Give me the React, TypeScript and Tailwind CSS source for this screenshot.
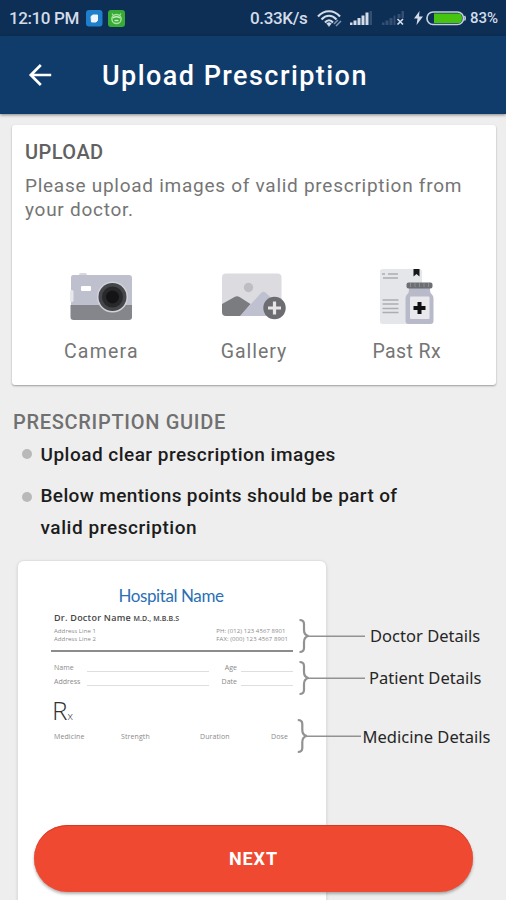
import type { ReactNode } from "react";

function StatusBar() {
  return (
    <div className="flex h-9 items-center bg-[#0d2f56] pl-[9px] text-[#d3dce8]">
      <span className="w-[77px] text-[17px] leading-[37px] font-medium tracking-[-0.4px] whitespace-nowrap">12:10 PM</span>
      <svg className="h-[17px] w-[17px]" viewBox="0 0 17 17">
        <rect width="16.5" height="16.5" rx="3" fill="#1f7fcb" />
        <path d="M5 6.500 7 5h4.500v5.500L10 12H5.500z" fill="#eef6fc" stroke="#eef6fc" strokeLinejoin="round" />
      </svg>
      <svg className="ml-[5px] h-[17px] w-[17px]" viewBox="0 0 17 17">
        <rect width="17" height="17" rx="3" fill="#37ab35" />
        <circle cx="8.500" cy="9" r="4.600" fill="none" stroke="#a9e3a0" strokeWidth="1.500" />
        <path d="M5 8q3.500-2.500 7 0M6.500 10.500h4" fill="none" stroke="#c5efc0" strokeWidth="1.400" />
        <path d="m4 3.500 1.500 2M13 3.500l-1.500 2" stroke="#a9e3a0" strokeWidth="1.200" />
      </svg>
      <span className="ml-[125px] w-[67px] text-[17px] leading-[37px] font-medium tracking-[-0.35px]">0.33K/s</span>
      <svg className="mt-px h-[20px] w-[26px]" viewBox="0 0 26 20" fill="none" stroke="#d3dce8">
        <path d="M1 7.500C7 .5 17 .5 23 7.500M4.500 10.500c4.500-5 10.500-5 15 0M8 13.500c2.500-3 5.500-3 8 0" strokeWidth="2.100" />
        <path d="m12 17.500-2.300-3q2.300-1.800 4.600 0z" fill="#d3dce8" strokeWidth=".5" />
        <path d="m17 15 4-4M19 17l5-5" stroke="#7f97b3" strokeWidth="1.500" />
      </svg>
      <svg className="ml-[7px] h-4 w-[23px]" viewBox="0 0 23 16">
        <path d="M0 15v-2.500h2.500V15zM3.500 15v-4.500h3V15zM7.500 15V8h3v7zM11.500 15V5.500h3V15zM15.500 15V2.500h3V15z" fill="#d3dce8" />
        <path d="M19.500 15V1H22v14z" fill="#344f71" />
      </svg>
      <svg className="ml-[9px] h-4 w-[23px]" viewBox="0 0 23 16">
        <path d="M0 15v-2.500h2.500V15zM3.500 15v-4.500h3V15zM7.500 15V8h3v7zM11.500 15V5.500h2V15zM19.500 8V1H22v7z" fill="#344f71" />
        <path d="M15.500 8V4h3v4z" fill="#344f71" />
        <path d="m15.500 9 5.500 5.500M21 9l-5.500 5.500" stroke="#d3dce8" strokeWidth="1.700" />
      </svg>
      <svg className="ml-[9px] h-[14px] w-[9px]" viewBox="0 0 9 14" fill="#d3dce8">
        <path d="M5.500 0 0 7.500h3.500L2.500 14 9 5.500H5z" />
      </svg>
      <svg className="ml-[3px] h-[15px] w-10" viewBox="0 0 40 15">
        <rect x="1" y="1" width="36.500" height="12.500" rx="6" fill="none" stroke="#c3cfdf" strokeWidth="1.700" />
        <path d="M38.500 5q1.500 2.250 0 4.500" fill="none" stroke="#c3cfdf" strokeWidth="1.500" />
        <path d="M8 2.500h25q3 0 3 4.750T33 12H8z" fill="#46c410" />
      </svg>
      <span className="ml-[4px] text-[15px] leading-[37px] font-medium">83%</span>
    </div>
  );
}

function CameraIcon() {
  return (
    <svg className="h-16 w-[72px]" viewBox="0 0 72 64">
      <rect x="14" y="9" width="8" height="4" rx="2" fill="#d7d7de" />
      <path d="M8 11h56q3 0 3 3v28H6V14q0-3 2-3z" fill="#bfc0ce" />
      <path d="M5.500 41H67v12q0 3-3 3H8.500q-3 0-3-3z" fill="#85868c" />
      <rect x="5" y="26" width="3.500" height="12" rx="1.500" fill="#e7e7ec" />
      <rect x="16" y="22" width="10" height="5" rx="1" fill="#fff" />
      <circle cx="47.500" cy="33" r="15.500" fill="#d2d2d9" />
      <circle cx="47.500" cy="33" r="14" fill="#45464a" />
      <circle cx="47.500" cy="33" r="10.500" fill="#28292b" />
      <circle cx="47.500" cy="33" r="6.500" fill="#141416" />
    </svg>
  );
}

function GalleryIcon() {
  return (
    <svg className="h-16 w-[72px]" viewBox="0 0 72 64">
      <rect x="4" y="9.500" width="59.500" height="42.500" rx="4" fill="#dcdce0" />
      <circle cx="30.500" cy="23.500" r="4.700" fill="#bdbdc3" />
      <path d="M22 52 43 29q2.500-2.500 5 0l15.500 15v5q0 3-3 3z" fill="#bfc0d0" />
      <path d="m4 40 12.500-7q2.500-1.500 5 0L32.500 40 22 52H8q-4 0-4-4z" fill="#7b7c80" />
      <circle cx="56.500" cy="44" r="11.200" fill="#6c6d71" />
      <path d="M56.500 37.500v13M50 44h13" stroke="#e6e6e8" strokeWidth="3.200" />
    </svg>
  );
}

function PastRxIcon() {
  return (
    <svg className="h-16 w-[72px]" viewBox="0 0 72 64">
      <rect x="9" y="5" width="42" height="55" rx="2.500" fill="#e5e6ea" />
      <path d="M11 10h3m3 0h10M12 14h15M11.500 36h16M11.500 40h16M11.500 44.500h16M11.500 48.500h16" stroke="#acacb1" strokeWidth="1.400" />
      <path d="M42.500 5h6v7.500l-3-2.500-3 2.500z" fill="#17171b" />
      <path d="M38 24h21v2q0 3 2 4.500 1.500 1.500 1.500 4V57q0 3-3 3H37.500q-3 0-3-3V34.500q0-2.500 1.500-4 2-1.500 2-4.500z" fill="#b8b9c9" />
      <rect x="35.500" y="18.500" width="26" height="6" rx="2" fill="#6d6e73" />
      <path d="M39.500 19v4m4.500-4v4m4.500-4v4m4.500-4v4m4.500-4v4" stroke="#8b8c91" />
      <rect x="39" y="32.500" width="19.500" height="22.500" rx="1" fill="#e9e9ed" />
      <path d="M48.500 38v12M42.500 44h12" stroke="#101012" strokeWidth="4" />
    </svg>
  );
}

function Source({ icon, label, spacing }: { icon: ReactNode; label: string; spacing: string }) {
  return (
    <button className="flex flex-col items-center">
      {icon}
      <span className={`mt-[12px] text-[19.5px] leading-6 whitespace-nowrap ${spacing}`}>{label}</span>
    </button>
  );
}

function Blank({ label, line, labelBox }: { label: string; line: string; labelBox: string }) {
  return (
    <div className="flex h-[14px] items-start justify-between">
      <span className={labelBox}>{label}</span>
      <span className={`mt-[10px] h-px bg-[#dedede] ${line}`} />
    </div>
  );
}

function SamplePaper() {
  return (
    <div className="h-[360px] w-[310px] rounded-t-[7px] border border-[#e0e0e0] bg-white px-[33px] pt-[25px] font-['Open_Sans'] text-[#8a8a8a] shadow-sm">
      <p className="pr-[2px] text-center font-[Lato] text-[17px] leading-5 tracking-[-0.4px] text-[#2b6fb5]">Hospital Name</p>
      <p className="mt-[6px] pl-[3px] text-[9px] leading-3 font-semibold tracking-[0.25px] whitespace-nowrap text-[#454545]">
        Dr. Doctor Name <span className="text-[7px] tracking-[0.1px]">M.D., M.B.B.S</span>
      </p>
      <div className="mt-[2px] flex justify-between pr-[5px] pl-[3px] text-[6px] leading-2 tracking-[0.08px] whitespace-nowrap">
        <p>Address Line 1<br />Address Line 2</p>
        <p>PH: (012) 123 4567 8901<br />FAX: (000) 123 4567 8901</p>
      </div>
      <div className="mt-[7px] h-[2px] bg-[#8b8d8c]" />
      <div className="mt-[9px] flex justify-between pl-[3px] text-[7px] leading-[14px]">
        <div className="w-[155px]">
          <Blank label="Name" line="w-[122px]" labelBox="" />
          <Blank label="Address" line="w-[122px]" labelBox="" />
        </div>
        <div className="w-[73px]">
          <Blank label="Age" line="w-[52px]" labelBox="w-[17px] text-right" />
          <Blank label="Date" line="w-[52px]" labelBox="w-[17px] text-right" />
        </div>
      </div>
      <p className="mt-[7px] pl-[1px] text-[26px] leading-7 font-light text-[#303030]">
        R<span className="text-[11px]">x</span>
      </p>
      <div className="grid grid-cols-[67px_79px_71px_auto] pl-[3px] text-[7px] leading-[14px] tracking-[0.1px]">
        <span>Medicine</span>
        <span>Strength</span>
        <span>Duration</span>
        <span>Dose</span>
      </div>
    </div>
  );
}

function Brackets() {
  return (
    <svg className="absolute top-[50px] left-[280px] h-[150px] w-[70px]" viewBox="297 610 70 150" fill="none" stroke="#929292">
      <g strokeWidth="2.200">
        <path d="M299.500 620q4.500 0 4.500 4v6q0 5 4.500 6-4.500 1-4.500 6v6q0 4-4.500 4" />
        <path d="M299.500 662q4.500 0 4.500 4v6q0 5 4.500 6-4.500 1-4.500 6v6q0 4-4.500 4" />
        <path d="M297.800 720q4.500 0 4.500 4v6q0 5 4.500 6-4.500 1-4.500 6v6q0 4-4.500 4" />
      </g>
      <path d="M308 636.300h57M308 678.300h57M306 736.300h55" strokeWidth="1.500" />
    </svg>
  );
}

export default function App() {
  return (
    <div className="relative h-[900px] w-[506px] overflow-hidden bg-[#eeeeee] font-[Roboto,sans-serif]">
      <StatusBar />
      <header className="relative flex h-[78px] items-center bg-[#103c6c] pl-[28px] text-white shadow-[0_1px_3px_rgba(0,0,0,0.45)]">
        <svg className="h-6 w-6" viewBox="0 0 24 24" fill="none" stroke="currentColor" strokeWidth="2.700">
          <path d="M23.200 12H3M12.800 2 2.800 12l10 10" />
        </svg>
        <h1 className="mt-px ml-[50px] text-[27px] leading-8 font-medium tracking-[1.45px] whitespace-nowrap">Upload Prescription</h1>
      </header>

      <section className="mt-[11px] ml-3 h-[260px] w-[484px] rounded-[3px] bg-white pt-[15px] pl-[13px] text-[#757575] shadow-[0_1px_2px_rgba(0,0,0,0.35)]">
        <h2 className="text-[20px] leading-6 font-medium tracking-[0.45px] text-[#616161]">UPLOAD</h2>
        <p className="mt-[10px] text-[19px] leading-6 tracking-[0.73px] whitespace-nowrap">
          Please upload images of valid prescription from<br />your doctor.
        </p>
        <div className="mt-[42px] grid w-[458px] grid-cols-3">
          <Source icon={<CameraIcon />} label="Camera" spacing="tracking-[1.2px]" />
          <Source icon={<GalleryIcon />} label="Gallery" spacing="tracking-[0.95px]" />
          <Source icon={<PastRxIcon />} label="Past Rx" spacing="tracking-[0.4px]" />
        </div>
      </section>

      <h2 className="mt-[25px] ml-[13px] text-[20px] leading-6 font-medium tracking-[0.7px] text-[#707070]">PRESCRIPTION GUIDE</h2>
      <ul className="mt-[5px] ml-[22px] flex flex-col gap-[9px] text-[19px] leading-8 font-medium whitespace-nowrap text-[#1c1c1c]">
        <li className="flex">
          <span className="mt-[10px] mr-[8.500px] h-[10px] w-[10px] rounded-full bg-[#b9b9b9]" />
          <span className="tracking-[0.48px]">Upload clear prescription images</span>
        </li>
        <li className="flex">
          <span className="mt-[12px] mr-[8.500px] h-[10px] w-[10px] rounded-full bg-[#b9b9b9]" />
          <span className="tracking-[0.36px]">Below mentions points should be part of<br /><span className="tracking-[0.57px]">valid prescription</span></span>
        </li>
      </ul>

      <div className="relative mt-[16px] ml-[17px] flex">
        <SamplePaper />
        <div className="pt-[66px] font-['Noto_Sans'] text-[16.500px] leading-5 tracking-[0.02px] whitespace-nowrap text-[#262626]">
          <p className="pl-[43px]">Doctor Details</p>
          <p className="mt-[22px] pl-[42px]">Patient Details</p>
          <p className="mt-[39px] pl-[35.500px]">Medicine Details</p>
        </div>
        <Brackets />
      </div>

      <button className="absolute top-[825px] left-[34px] h-[67px] w-[439px] rounded-full bg-[#ef4a31] text-[18px] font-bold tracking-[0.9px] text-white shadow-[0_2px_3px_rgba(0,0,0,0.3),inset_0_1px_0_#dc3820]">
        NEXT
      </button>
    </div>
  );
}
